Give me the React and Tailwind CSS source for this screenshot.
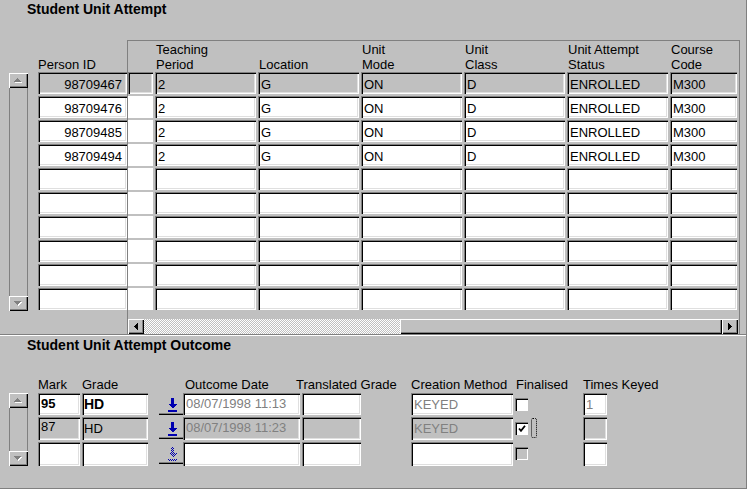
import React from 'react';

const SUNKEN = 'shadow-[inset_1px_1px_0_#808080,inset_2px_2px_0_#000,inset_-1px_-1px_0_#fff,inset_-2px_-2px_0_#dfdfdf]';
const RAISED = 'shadow-[inset_1px_1px_0_#fff,inset_-1px_-1px_0_#000,inset_-2px_-2px_0_#808080]';

const attempts = [
  { id: '98709467', tp: '2', loc: 'G', mode: 'ON', cls: 'D', status: 'ENROLLED', code: 'M300' },
  { id: '98709476', tp: '2', loc: 'G', mode: 'ON', cls: 'D', status: 'ENROLLED', code: 'M300' },
  { id: '98709485', tp: '2', loc: 'G', mode: 'ON', cls: 'D', status: 'ENROLLED', code: 'M300' },
  { id: '98709494', tp: '2', loc: 'G', mode: 'ON', cls: 'D', status: 'ENROLLED', code: 'M300' },
  null, null, null, null, null, null,
];

const outcomes = [
  { mark: '95', grade: 'HD', date: '08/07/1998 11:13', method: 'KEYED', times: '1', gray: false, bold: true, h: 'h-[22px]' },
  { mark: '87', grade: 'HD', date: '08/07/1998 11:23', method: 'KEYED', times: '', gray: true, checked: true, focus: true, h: 'h-[23px]' },
  { mark: '', grade: '', date: '', method: '', times: '', gray: false, empty: true, h: 'h-[24px]' },
];

function Cell({ w, h = 'h-[22px]', gray, className = '', children }) {
  return (
    <div className={`${w} ${h} shrink-0 ${gray ? 'bg-[#c0c0c0]' : 'bg-white'} ${SUNKEN} leading-[15px] whitespace-nowrap overflow-hidden ${className}`}>
      {children}
    </div>
  );
}

function Tri({ dir }) {
  if (dir === 'up') {
    return (
      <svg width="9" height="6" viewBox="0 0 9 6" shapeRendering="crispEdges">
        <polygon points="4.5,1 8,5 1,5" fill="#fff" />
        <polygon points="3.5,0 7,4 0,4" fill="#808080" />
      </svg>
    );
  }
  return (
    <svg width="9" height="6" viewBox="0 0 9 6" shapeRendering="crispEdges">
      <polygon points="1,1 8,1 4.5,5" fill="#fff" />
      <polygon points="0,0 7,0 3.5,4" fill="#808080" />
    </svg>
  );
}

function VScroll({ className = '' }) {
  return (
    <div className={`flex flex-col w-[19px] shrink-0 ${className}`}>
      <div className={`h-[15px] ${RAISED} flex items-center justify-center`}>
        <Tri dir="up" />
      </div>
      <div className="flex-1 border-x border-[#808080]" />
      <div className={`h-[15px] ${RAISED} flex items-center justify-center`}>
        <Tri dir="down" />
      </div>
    </div>
  );
}

function DownIcon({ disabled }) {
  const fill = disabled ? 'url(#dith)' : '#0000b0';
  return (
    <svg width="9" height="14" viewBox="0 0 9 14" shapeRendering="crispEdges">
      {disabled && (
        <defs>
          <pattern id="dith" width="2" height="2" patternUnits="userSpaceOnUse">
            <rect width="1" height="1" fill="#0000b0" />
            <rect x="1" y="1" width="1" height="1" fill="#0000b0" />
          </pattern>
        </defs>
      )}
      <rect x="3" y="0" width="3" height="6" fill={fill} />
      <polygon points="0,6 9,6 4.5,10.5" fill={fill} />
      <rect x="0" y="12" width="9" height="2" fill={fill} />
    </svg>
  );
}

function Check({ checked, gray }) {
  return (
    <div className={`w-[13px] h-[13px] mt-[5px] shrink-0 ${gray ? 'bg-[#c0c0c0]' : 'bg-white'} shadow-[inset_1px_1px_0_#808080,inset_2px_2px_0_#000,inset_-1px_-1px_0_#fff] flex items-center justify-center`}>
      {checked && (
        <svg width="8" height="7" viewBox="0 0 8 7">
          <path d="M1 3.5 L3 5.8 L7 0.8" stroke="#000" strokeWidth="1.8" fill="none" />
        </svg>
      )}
    </div>
  );
}

export default function App() {
  return (
    <div className="w-[747px] h-[489px] bg-[#c0c0c0] border-r border-b border-[#808080] text-[13px] text-black font-['Liberation_Sans',Arial,sans-serif] overflow-hidden">
      {/* Student Unit Attempt */}
      <div className="h-[335px] border-b border-[#808080] flex flex-col">
        <div className="h-[40px] pl-[27px] pt-[2px] text-[14px] font-bold leading-[15px]">Student Unit Attempt</div>
        <div className="flex flex-1">
          <div className="w-[127px] shrink-0 flex flex-col">
            <div className="h-[32px] flex items-end pl-[38px] leading-[15px]">Person ID</div>
            <div className="flex">
              <VScroll className="ml-[9px] mt-[1px] h-[238px]" />
              <div className="ml-[10px] flex flex-col gap-[2px]">
                {attempts.map((r, i) => (
                  <Cell key={i} w="w-[89px]" gray={i === 0} className="pt-[5px] pr-[5px] text-right">
                    {r ? r.id : ''}
                  </Cell>
                ))}
              </div>
            </div>
          </div>

          <div className="w-[613px] shrink-0 border-l border-t border-r border-[#808080] flex flex-col">
            <div className="h-[31px] flex items-end gap-[2px] leading-[15px]">
              <div className="w-[25px] shrink-0" />
              <div className="w-[101px] shrink-0 pl-[1px]">Teaching<br />Period</div>
              <div className="w-[101px] shrink-0 pl-[1px]">Location</div>
              <div className="w-[101px] shrink-0 pl-[1px]">Unit<br />Mode</div>
              <div className="w-[101px] shrink-0 pl-[1px]">Unit<br />Class</div>
              <div className="w-[101px] shrink-0 pl-[1px]">Unit Attempt<br />Status</div>
              <div className="w-[67px] shrink-0 pl-[1px]">Course<br />Code</div>
            </div>
            <div className="flex flex-col gap-[2px]">
              {attempts.map((r, i) => (
                <div key={i} className="flex gap-[2px]">
                  {i === 0 ? (
                    <Cell w="w-[25px]" gray />
                  ) : (
                    <div className="w-[25px] h-[22px] shrink-0 bg-white" />
                  )}
                  <Cell w="w-[101px]" gray={i === 0} className="pt-[5px] pl-[3px]">{r?.tp}</Cell>
                  <Cell w="w-[101px]" gray={i === 0} className="pt-[5px] pl-[3px]">{r?.loc}</Cell>
                  <Cell w="w-[101px]" gray={i === 0} className="pt-[5px] pl-[3px]">{r?.mode}</Cell>
                  <Cell w="w-[101px]" gray={i === 0} className="pt-[5px] pl-[3px]">{r?.cls}</Cell>
                  <Cell w="w-[101px]" gray={i === 0} className="pt-[5px] pl-[3px]">{r?.status}</Cell>
                  <Cell w="w-[67px]" gray={i === 0} className="pt-[5px] pl-[3px]">{r?.code}</Cell>
                </div>
              ))}
            </div>
            <div className="mt-auto flex h-[15px] w-[610px]">
              <div className={`w-[16px] shrink-0 ${RAISED} flex items-center justify-center`}>
                <svg width="4" height="7" viewBox="0 0 4 7" shapeRendering="crispEdges">
                  <polygon points="4,0 4,7 0,3.5" fill="#000" />
                </svg>
              </div>
              <div className="w-[256px] shrink-0 bg-[image:repeating-conic-gradient(#fff_0%_25%,#c0c0c0_0%_50%)] bg-[length:2px_2px]" />
              <div className={`w-[322px] shrink-0 ${RAISED}`} />
              <div className={`w-[16px] shrink-0 ${RAISED} flex items-center justify-center`}>
                <svg width="4" height="7" viewBox="0 0 4 7" shapeRendering="crispEdges">
                  <polygon points="0,0 0,7 4,3.5" fill="#000" />
                </svg>
              </div>
            </div>
          </div>
        </div>
      </div>

      {/* Student Unit Attempt Outcome */}
      <div className="border-t border-white h-[153px]">
        <div className="pl-[27px] pt-[2px] text-[14px] font-bold leading-[15px]">Student Unit Attempt Outcome</div>
        <div className="mt-[24px] h-[16px] flex pl-[38px] leading-[15px] whitespace-nowrap">
          <div className="w-[44px] shrink-0">Mark</div>
          <div className="w-[103px] shrink-0">Grade</div>
          <div className="w-[111px] shrink-0">Outcome Date</div>
          <div className="w-[115px] shrink-0">Translated Grade</div>
          <div className="w-[105px] shrink-0">Creation Method</div>
          <div className="w-[67px] shrink-0">Finalised</div>
          <div className="shrink-0">Times Keyed</div>
        </div>
        <div className="flex">
          <VScroll className="ml-[9px] h-[73px]" />
          <div className="flex flex-col gap-[2px]">
            {outcomes.map((o, i) => (
              <div key={i} className="flex items-start">
                <Cell w="w-[42px]" h={o.h} gray={o.gray} className={`ml-[10px] pl-[3px] ${o.bold ? 'font-bold pt-[3px]' : 'pt-[2px]'}`}>
                  {o.mark}
                </Cell>
                <Cell w="w-[66px]" h={o.h} gray={o.gray} className={`ml-[2px] pl-[2px] ${o.bold ? 'font-bold text-[14px] pt-[4px]' : 'pt-[4px]'}`}>
                  {o.grade}
                </Cell>
                <div className={`ml-[11px] w-[24px] h-[22px] shrink-0 shadow-[inset_0_-1px_0_#000,inset_0_-2px_0_#808080] flex justify-center pt-[5px] pl-[3px]`}>
                  <DownIcon disabled={o.empty} />
                </div>
                <Cell w="w-[117px]" h={o.h} gray={o.gray} className="pl-[3px] pt-[3px] text-[#808080]">{o.date}</Cell>
                <Cell w="w-[59px]" h={o.h} gray={o.gray} className="ml-[2px]" />
                <Cell w="w-[102px]" h={o.h} gray={o.gray} className="ml-[50px] pl-[3px] pt-[4px] text-[#808080]">{o.method}</Cell>
                <div className="ml-[2px]">
                  <Check checked={o.checked} gray={o.empty} />
                </div>
                {o.focus ? (
                  <div className="ml-[3px] mt-[1px] w-[6px] h-[20px] shrink-0 border border-dotted border-black rounded-[2px]" />
                ) : (
                  <div className="ml-[3px] w-[6px] shrink-0" />
                )}
                <Cell w="w-[24px]" h={o.h} gray={o.gray} className="ml-[46px] pl-[3px] pt-[4px] text-[#808080]">{o.times}</Cell>
              </div>
            ))}
          </div>
        </div>
      </div>
    </div>
  );
}
